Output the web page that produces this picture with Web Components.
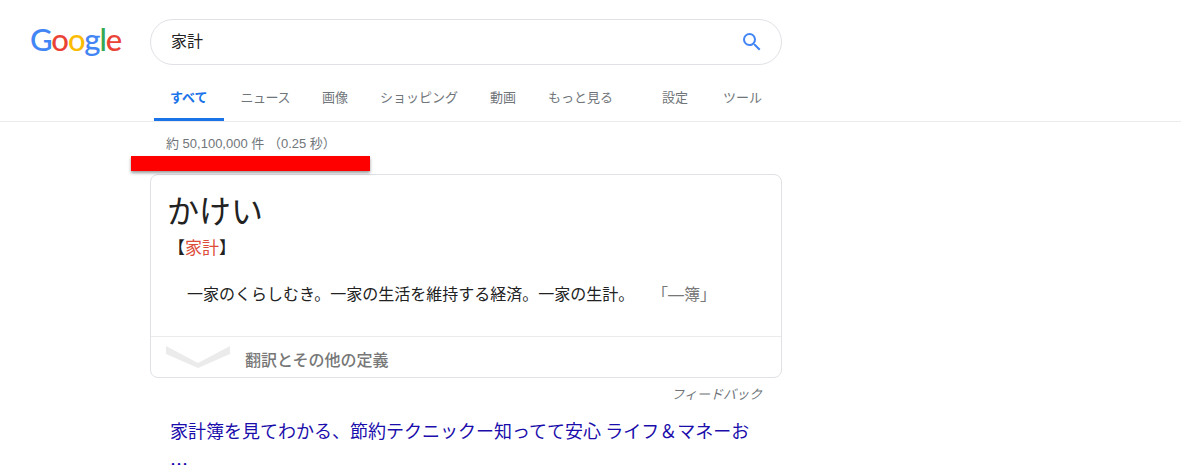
<!DOCTYPE html>
<html lang="ja">
<head>
<meta charset="utf-8">
<title>家計 - Google 検索</title>
<style>
html, body { margin: 0; height: 465px; overflow: hidden; background: #fff; }
body { font-family: "Liberation Sans", "Noto Sans CJK JP", sans-serif; }
</style>
</head>
<body>
<search-header query="家計"></search-header>
<search-results>
  <result-stats>約 50,100,000 件 （0.25 秒）</result-stats>
  <dictionary-card reading="かけい" word="家計" more="翻訳とその他の定義">
    一家のくらしむき。一家の生活を維持する経済。一家の生計。
    <span slot="usage">「—簿」</span>
  </dictionary-card>
  <feedback-link>フィードバック</feedback-link>
  <result-link>家計簿を見てわかる、節約テクニックー知ってて安心 ライフ＆マネーお …</result-link>
</search-results>

<script>
// ロゴ: 文字はテキストのまま色だけ分ける
class GoogleLogo extends HTMLElement {
    constructor() {
        super();
        const shadow = this.attachShadow({ mode: "open" });
        shadow.innerHTML = `
        <style>
        :host {
            display: block;
            width: 92px;
            height: 38px;
            margin-top: -6px;
            font: 500 31px/38px Lato, "Noto Sans", sans-serif;
            letter-spacing: -1.1px;
            white-space: nowrap;
        }
        .b { color: #4285f4; }
        .r { color: #ea4335; }
        .y { color: #fbbc05; }
        .g { color: #34a853; }
        </style>
        <span class="b">G</span><span class="r">o</span><span class="y">o</span><span class="b">g</span><span class="g">l</span><span class="r">e</span>
        `;
    }
}
customElements.define("google-logo", GoogleLogo);

class SearchBox extends HTMLElement {
    constructor() {
        super();
        const shadow = this.attachShadow({ mode: "open" });
        shadow.innerHTML = `
        <style>
        :host {
            display: flex;
            align-items: center;
            justify-content: space-between;
            box-sizing: border-box;
            width: 632px;
            height: 46px;
            padding: 0 17px 0 20px;
            border: 1px solid #dfe1e5;
            border-radius: 23px;
            background: #fff;
            color: #222;
            font-size: 16px;
        }
        span { margin-top: -4px; }
        svg { display: block; width: 24px; height: 24px; fill: #4285f4; }
        </style>
        <span><slot></slot></span>
        <svg viewBox="0 0 24 24"><path d="M15.5 14h-.79l-.28-.27A6.47 6.47 0 0 0 16 9.5 6.5 6.5 0 1 0 9.5 16c1.61 0 3.09-.59 4.23-1.57l.27.28v.79l5 4.99L20.49 19l-4.99-5zm-6 0C7.01 14 5 11.99 5 9.5S7.01 5 9.5 5 14 7.01 14 9.5 11.99 14 9.5 14z"/></svg>
        `;
    }
}
customElements.define("search-box", SearchBox);

class NavTab extends HTMLElement {
    constructor() {
        super();
        const shadow = this.attachShadow({ mode: "open" });
        shadow.innerHTML = `
        <style>
        :host {
            display: block;
            box-sizing: border-box;
            height: 44px;
            padding: 0 16px;
            color: #70757a;
            font-size: 13px;
            line-height: 41px;
            white-space: nowrap;
        }
        :host([active]) {
            color: #1a73e8;
            font-weight: 700;
            border-bottom: 3px solid #1a73e8;
        }
        :host([tight]) {
            padding-left: 17px;
            letter-spacing: -.5px;
        }
        </style>
        <slot></slot>
        `;
    }
}
customElements.define("nav-tab", NavTab);

class SearchHeader extends HTMLElement {
    constructor() {
        super();
        const shadow = this.attachShadow({ mode: "open" });
        shadow.innerHTML = `
        <style>
        :host {
            display: block;
            height: 122px;
            box-sizing: border-box;
            border-bottom: 1px solid #ebebeb;
        }
        .top {
            display: flex;
            align-items: center;
            height: 46px;
            padding-top: 19px;
        }
        google-logo { margin-left: 30px; margin-right: 28px; }
        nav {
            display: flex;
            padding: 12px 0 0 154px;
        }
        .gap { width: 17px; }
        .gap.small { width: 3px; }
        </style>
        <div class="top">
            <google-logo></google-logo>
            <search-box>${this.getAttribute("query")}</search-box>
        </div>
        <nav>
            <nav-tab active>すべて</nav-tab>
            <nav-tab tight>ニュース</nav-tab>
            <nav-tab>画像</nav-tab>
            <nav-tab>ショッピング</nav-tab>
            <nav-tab>動画</nav-tab>
            <nav-tab>もっと見る</nav-tab>
            <div class="gap"></div>
            <nav-tab>設定</nav-tab>
            <div class="gap small"></div>
            <nav-tab>ツール</nav-tab>
        </nav>
        `;
    }
}
customElements.define("search-header", SearchHeader);

class SearchResults extends HTMLElement {
    constructor() {
        super();
        const shadow = this.attachShadow({ mode: "open" });
        shadow.innerHTML = `
        <style>
        :host {
            display: block;
            width: 632px;
            margin-left: 150px;
        }
        </style>
        <slot></slot>
        `;
    }
}
customElements.define("search-results", SearchResults);

// 件数の行。赤い帯は元画像で行の下に重ねられている
class ResultStats extends HTMLElement {
    constructor() {
        super();
        const shadow = this.attachShadow({ mode: "open" });
        shadow.innerHTML = `
        <style>
        :host {
            display: block;
            position: relative;
            height: 52px;
            padding-left: 16px;
            box-sizing: border-box;
            color: #70757a;
            font-size: 13px;
            line-height: 44px;
            white-space: nowrap;
        }
        .bar {
            position: absolute;
            left: -19px;
            top: 34px;
            width: 239px;
            height: 15px;
            background: #f00;
            box-shadow: 0 2px 3px rgba(0, 0, 0, .4);
        }
        </style>
        <slot></slot>
        <div class="bar"></div>
        `;
    }
}
customElements.define("result-stats", ResultStats);

class DictionaryCard extends HTMLElement {
    constructor() {
        super();
        const shadow = this.attachShadow({ mode: "open" });
        shadow.innerHTML = `
        <style>
        :host {
            display: block;
            box-sizing: border-box;
            height: 204px;
            border: 1px solid #dfe1e5;
            border-radius: 8px;
            background: #fff;
        }
        .body {
            box-sizing: border-box;
            height: 162px;
            padding: 17px 17px 0;
            border-bottom: 1px solid #ebebeb;
        }
        h2 {
            margin: 0 0 0 -1px;
            color: #222;
            font-size: 32px;
            font-weight: 400;
            line-height: 40px;
        }
        .word {
            color: #222;
            font-size: 17px;
            line-height: 24px;
            margin-top: 5px;
        }
        .word b { color: #dd4b39; font-weight: 400; }
        .def {
            display: flex;
            justify-content: space-between;
            margin-top: 22px;
            padding: 0 48px 0 19px;
            color: #222;
            font-size: 16px;
            line-height: 24px;
        }
        .usage { color: #777; }
        .more {
            display: flex;
            align-items: center;
            height: 40px;
            padding-left: 15px;
            color: #777;
            font-size: 16px;
            font-weight: 500;
        }
        .more span { margin-top: 3px; }
        svg { display: block; width: 64px; height: 22px; margin-right: 15px; }
        </style>
        <div class="body">
            <h2>${this.getAttribute("reading")}</h2>
            <div class="word">【<b>${this.getAttribute("word")}</b>】</div>
            <div class="def"><span><slot></slot></span><span class="usage"><slot name="usage"></slot></span></div>
        </div>
        <div class="more">
            <svg viewBox="0 0 64 22"><path d="M0 0 32 17 64 0V8L32 22 0 8Z" fill="#ebebeb"/></svg>
            <span>${this.getAttribute("more")}</span>
        </div>
        `;
    }
}
customElements.define("dictionary-card", DictionaryCard);

class FeedbackLink extends HTMLElement {
    constructor() {
        super();
        const shadow = this.attachShadow({ mode: "open" });
        shadow.innerHTML = `
        <style>
        :host {
            display: block;
            padding-right: 20px;
            text-align: right;
            color: #70757a;
            font-size: 13px;
            font-style: italic;
            line-height: 33px;
        }
        </style>
        <slot></slot>
        `;
    }
}
customElements.define("feedback-link", FeedbackLink);

class ResultLink extends HTMLElement {
    constructor() {
        super();
        const shadow = this.attachShadow({ mode: "open" });
        shadow.innerHTML = `
        <style>
        :host {
            display: block;
            margin-top: 3px;
            padding: 0 20px;
            color: #1a0dab;
            font-family: "Noto Sans CJK JP", sans-serif;
            font-size: 18px;
            line-height: 33px;
        }
        </style>
        <slot></slot>
        `;
    }
}
customElements.define("result-link", ResultLink);
</script>
</body>
</html>
